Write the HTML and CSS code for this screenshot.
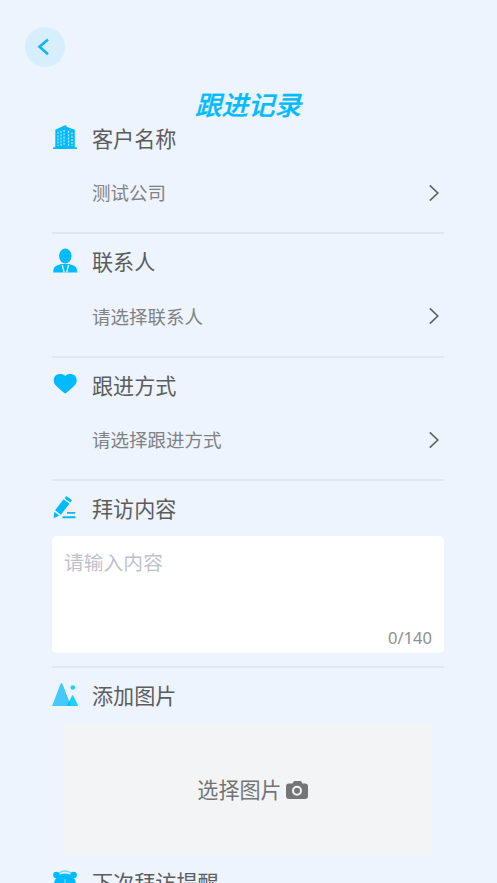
FILE: index.html
```html
<!DOCTYPE html>
<html lang="zh-CN">
<head>
<meta charset="utf-8">
<title>跟进记录</title>
<link rel="stylesheet" href="styles.css">
</head>
<body>
<main class="page">
  <header class="topbar">
    <button class="back" aria-label="返回"><svg width="40" height="40" viewBox="0 0 40 40"><path d="M23 12.500 14.500 19.700l8.500 7.500"/></svg></button>
  </header>
  <h1 class="title">跟进记录</h1>

  <section class="field">
    <div class="label">
      <svg class="icon" viewBox="0 0 26 26"><path d="M1 22.200h2.300V4.700L13 .2l1.500.6v1l8.300 3v17.400H25v1.700H1z"/><path class="windows" d="M6 7v14M9 6v15M12 5v16M16.500 6v15M20 7.500V21"/></svg>
      <span>客户名称</span>
    </div>
    <div class="select"><span>测试公司</span><svg class="arrow" viewBox="0 0 12 18"><path d="m1.800 1.400 8 7.600-8 7.600"/></svg></div>
  </section>

  <section class="field">
    <div class="label">
      <svg class="icon" viewBox="0 0 26 26"><ellipse cx="13.300" cy="8" rx="6.200" ry="7.500"/><path d="M1.200 24.500c0-5.500 2-6.700 8-8.500h8c6 1.800 8 3 8 8.500z"/><path class="cut" d="m10.200 17 2 7.500M16.600 17l-2 7.500"/></svg>
      <span>联系人</span>
    </div>
    <div class="select"><span>请选择联系人</span><svg class="arrow" viewBox="0 0 12 18"><path d="m1.800 1.400 8 7.600-8 7.600"/></svg></div>
  </section>

  <section class="field">
    <div class="label">
      <svg class="icon" viewBox="0 0 26 26"><path d="M13.200 3.900C9.500.6 1.700 1.400 1.700 8.600c0 3.800 3 6.300 10.300 12.200q1.200 1 2.400 0C21.700 14.900 24.700 12.400 24.700 8.600 24.700 1.400 16.900.6 13.200 3.900z"/></svg>
      <span>跟进方式</span>
    </div>
    <div class="select"><span>请选择跟进方式</span><svg class="arrow" viewBox="0 0 12 18"><path d="m1.800 1.400 8 7.600-8 7.600"/></svg></div>
  </section>

  <section class="field field-text">
    <div class="label">
      <svg class="icon" viewBox="0 0 26 26"><path class="cream" d="m18 10 5 5v6h-9l-3-2z"/><path d="m14.300 1 5.700 4.300-1.700 2.200-5.700-4.300zM11.600 4.300l5.800 4.400-8.500 11-5.800-4.400zM2.300 16.800l5 3.800-5.600 2.600zM15 17h8v1.800h-8zM10.500 21.300h13v2h-13z"/></svg>
      <span>拜访内容</span>
    </div>
    <div class="textbox"><span class="placeholder">请输入内容</span><span class="count">0/140</span></div>
  </section>

  <section class="field-image">
    <div class="label">
      <svg class="icon" viewBox="0 0 26 26"><path class="peak" d="M0 24 8.500 2q1-1.800 2 0L19 24z"/><path class="hill" d="m14.800 24 5-10q.8-1.400 1.600 0l5 10z"/><path class="overlap" d="m14.800 24 2.300-5L19 24z"/><circle class="hill" cx="20.800" cy="5.500" r="2.300"/></svg>
      <span>添加图片</span>
    </div>
    <div class="upload"><span>选择图片</span><svg class="camera" viewBox="0 0 22 18"><path d="M3 2.500h3.500L7.700.4Q8 0 8.600 0h5.800q.6 0 .9.400l1.200 2.100H19q3 0 3 3V15q0 3-3 3H3q-3 0-3-3V5.500q0-3 3-3z"/><circle class="ring" cx="11" cy="9.800" r="4"/></svg></div>
  </section>

  <section>
    <div class="label label-last">
      <svg class="icon" viewBox="0 0 26 26"><circle cx="13" cy="14.500" r="11"/><circle cx="4.500" cy="5" r="3.300"/><circle cx="21.500" cy="5" r="3.300"/><path class="handle" d="M7 3q6-4 12 0"/><path class="cut hand" d="M13 9v7h5"/></svg>
      <span>下次拜访提醒</span>
    </div>
  </section>
</main>
</body>
</html>
```

FILE: styles.css
```css
* { box-sizing: border-box; }
html, body { height: 100%; margin: 0; overflow: hidden; }
body {
  background: #edf4fd;
  color: #5c5c5c;
  font-family: "Noto Sans CJK SC", sans-serif;
}
.page { padding: 27px 53px 0 52px; }
.topbar { height: 60px; }
.back {
  display: block;
  width: 40px;
  height: 40px;
  margin-left: -27px;
  padding: 0;
  border: 0;
  border-radius: 50%;
  background: #d7eefc;
}
.back svg { display: block; fill: none; stroke: #12b4f7; stroke-width: 2.6; }
.title {
  height: 24px;
  margin: 0;
  color: #00bbff;
  font-size: 26.5px;
  font-style: italic;
  font-weight: 500;
  line-height: 34px;
  text-align: center;
  -webkit-text-stroke: .3px #00bbff;
}
.field { height: 123.4px; border-bottom: 2px solid #e2e6ec; }
.label {
  display: flex;
  align-items: center;
  gap: 14px;
  height: 54px;
  font-size: 21.1px;
  line-height: 30px;
}
.label span { padding-bottom: .4px; }
.icon { flex: none; width: 26px; height: 26px; fill: #00bbff; }
.windows { fill: none; stroke: #b5e8ff; stroke-width: 1.2; stroke-dasharray: 2 1.2; }
.cut { fill: none; stroke: #edf4fd; stroke-width: 1.3; }
.cream { fill: #f8eee9; }
.peak { fill: #45c8fc; }
.hill { fill: #18d3fc; }
.overlap { fill: #10bdf3; }
.handle { fill: none; stroke: #70d8ff; stroke-width: 1.3; }
.hand { stroke: #70d8ff; }
.select {
  display: flex;
  align-items: center;
  justify-content: space-between;
  height: 56px;
  padding: 0 4.5px 0 40px;
  color: #828282;
  font-size: 18.5px;
}
.select span { padding-bottom: 1.6px; }
.arrow { width: 12px; height: 18px; fill: none; stroke: #626468; stroke-width: 1.7; }
.field-text { height: 187px; }
.textbox {
  display: flex;
  flex-direction: column;
  justify-content: space-between;
  height: 117px;
  margin-top: 1px;
  padding: 12px 12px 4px;
  border-radius: 5px;
  background: #fff;
}
.placeholder { color: #bfc2cc; font-size: 19.8px; line-height: 28px; }
.count {
  align-self: flex-end;
  color: #8d8e90;
  font-family: "Noto Sans", sans-serif;
  font-size: 16.5px;
  line-height: 23px;
}
.upload {
  display: flex;
  align-items: center;
  justify-content: center;
  gap: 4px;
  height: 132px;
  margin: 2px 12px 0;
  padding-left: 9px;
  background: #f3f4f6;
  color: #747474;
  font-size: 21.1px;
}
.upload span { padding-bottom: 1.6px; }
.camera { width: 22px; height: 18px; fill: #747577; }
.ring { fill: #747577; stroke: #f3f4f6; stroke-width: 2; }
.label-last { height: 53px; }
```
